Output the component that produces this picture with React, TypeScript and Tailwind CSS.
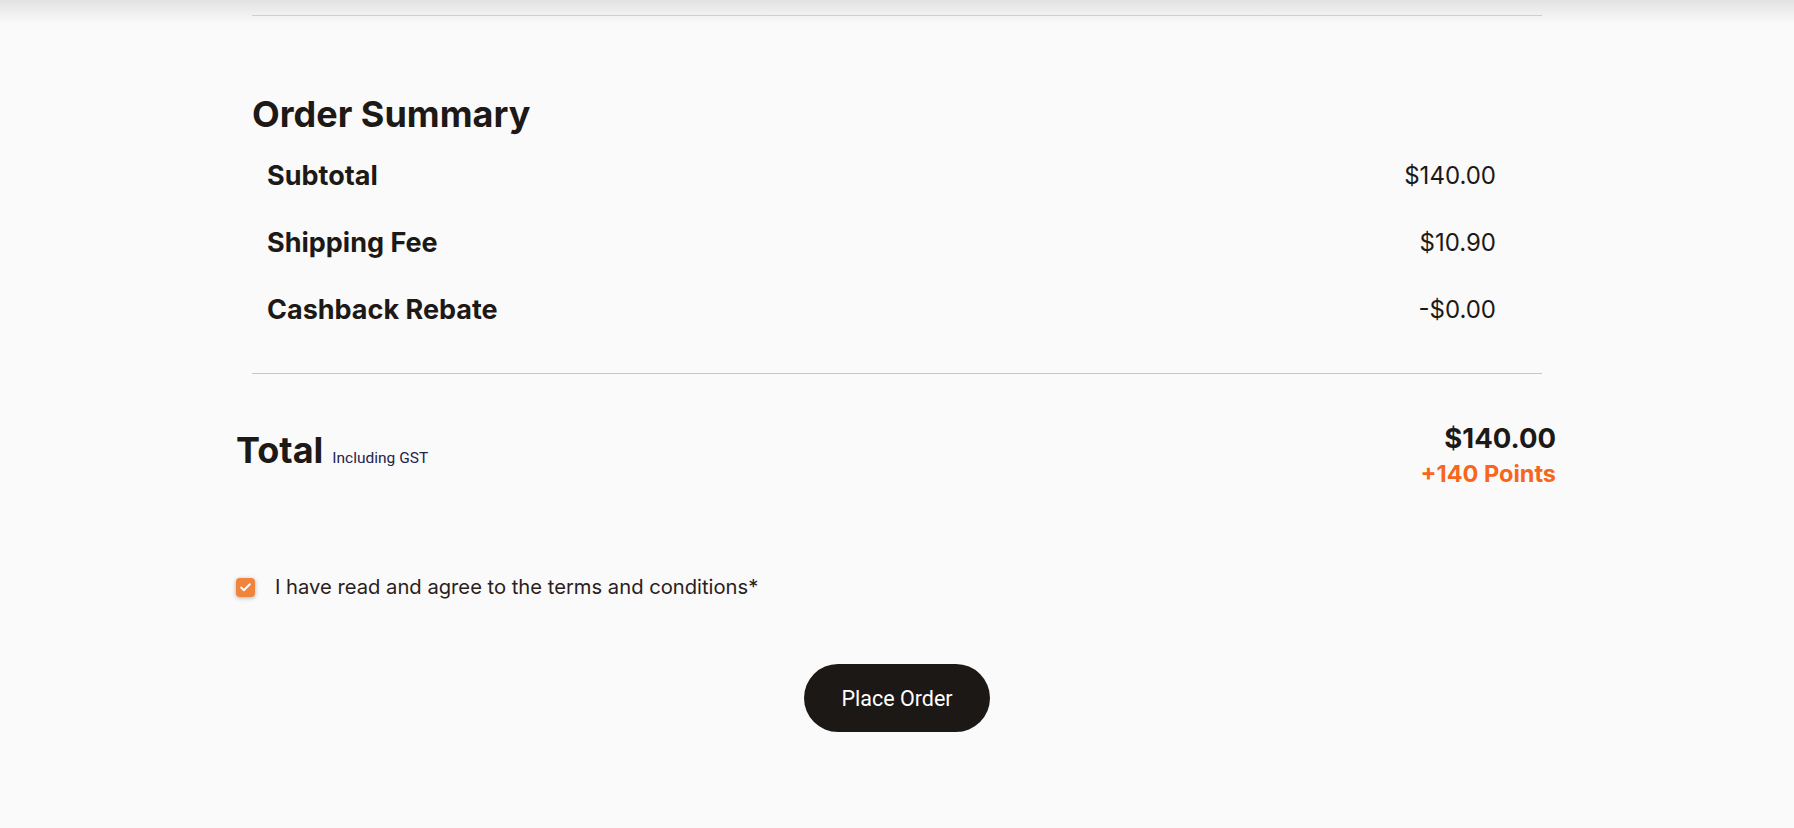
import { Check } from "lucide-react";

const rows = [
  { label: "Subtotal", value: "$140.00" },
  { label: "Shipping Fee", value: "$10.90" },
  { label: "Cashback Rebate", value: "-$0.00" },
];

export default function App() {
  return (
    <div className="relative min-h-[828px] bg-[#fafafa] font-['Inter',sans-serif] text-[#1c1917]">
      {/* shadow from the header above */}
      <div className="pointer-events-none absolute inset-x-0 top-0 h-[24px] bg-gradient-to-b from-[#e2e2e2] to-transparent" />

      <div className="mx-auto w-[1290px] pt-[15px]">
        <div className="h-px bg-[#c4c4c4]" />

        <h2 className="mt-[76px] text-[36px] font-bold leading-[44px]">Order Summary</h2>

        <div className="mt-[6px]">
          {rows.map((row) => (
            <div key={row.label} className="flex items-center justify-between py-[19px] pl-[15px] pr-[46px]">
              <span className="text-[27px] font-bold leading-[29px]">{row.label}</span>
              <span className="text-[24px] leading-[29px]">{row.value}</span>
            </div>
          ))}
        </div>

        <div className="mt-[30px] h-px bg-[#c4c4c4]" />

        <div className="-ml-[16px] -mr-[14px] mt-[48px] flex items-start justify-between">
          <div className="mt-[6px] flex items-baseline gap-[9px]">
            <span className="text-[36px] font-bold leading-[44px]">Total</span>
            <span className="font-['Roboto',sans-serif] text-[15.5px] text-[#25244a]">Including GST</span>
          </div>
          <div className="flex flex-col items-end">
            <span className="text-[27.5px] font-bold leading-[32px]">$140.00</span>
            <span className="mt-[6px] text-[23.5px] font-bold leading-[28px] text-[#f6671b]">+140 Points</span>
          </div>
        </div>

        <label className="-ml-[16px] mt-[85px] flex items-center gap-[20px]">
          <span className="flex h-[19px] w-[19px] items-center justify-center rounded-[4px] bg-[#f0843c] shadow-[0_1px_4px_rgba(0,0,0,0.3)]">
            <Check className="h-[13px] w-[13px] text-white" strokeWidth={3.5} />
          </span>
          <span className="text-[20.2px] leading-[28px] text-[#2a201c]">
            I have read and agree to the terms and conditions*
          </span>
        </label>

        <div className="mt-[63px] flex justify-center">
          <button className="h-[68px] w-[186px] rounded-full bg-[#1c1816] pt-[2px] font-['Roboto',sans-serif] text-[21.5px] text-white">
            Place Order
          </button>
        </div>
      </div>
    </div>
  );
}
